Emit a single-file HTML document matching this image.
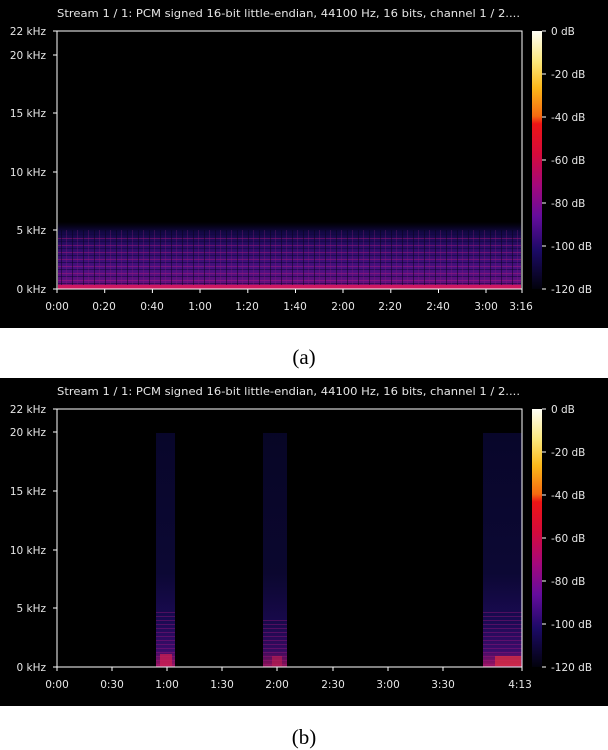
<!DOCTYPE html>
<html><head><style>
html,body{margin:0;padding:0;background:#fff;width:608px;height:750px;overflow:hidden}
svg{display:block}
text{font-family:"DejaVu Sans","Liberation Sans",sans-serif;font-size:10.5px;fill:#e6e6e6}
.cap{font-family:"Liberation Serif",serif;font-size:21px;fill:#000}
</style></head><body>
<svg width="608" height="750" xmlns="http://www.w3.org/2000/svg">
<defs>
<linearGradient id="cb" x1="0" y1="0" x2="0" y2="1">
<stop offset="0" stop-color="#fffff6"/>
<stop offset="0.12" stop-color="#fbe77a"/>
<stop offset="0.22" stop-color="#fbb81a"/>
<stop offset="0.33" stop-color="#f56a10"/>
<stop offset="0.36" stop-color="#ee1515"/>
<stop offset="0.48" stop-color="#d40a3c"/>
<stop offset="0.6" stop-color="#a4087c"/>
<stop offset="0.72" stop-color="#640c9c"/>
<stop offset="0.85" stop-color="#1c0a66"/>
<stop offset="1" stop-color="#02020c"/>
</linearGradient>
<linearGradient id="ba" x1="0" y1="0" x2="0" y2="1">
<stop offset="0" stop-color="#0a0630" stop-opacity="0"/>
<stop offset="0.15" stop-color="#120844"/>
<stop offset="0.35" stop-color="#2c0c68"/>
<stop offset="0.7" stop-color="#4a1080"/>
<stop offset="0.9" stop-color="#60107e"/>
<stop offset="1" stop-color="#c01060"/>
</linearGradient>
<pattern id="hl" width="7" height="7" patternUnits="userSpaceOnUse">
<rect width="7" height="1" fill="#c01878" opacity="0.4"/>
<rect y="3" width="7" height="1" fill="#100640" opacity="0.6"/>
</pattern>
<pattern id="vl" width="11" height="4" patternUnits="userSpaceOnUse">
<rect width="1" height="4" fill="#901a80" opacity="0.3"/>
<rect x="6" width="1" height="4" fill="#060318" opacity="0.5"/>
</pattern>
<linearGradient id="sb" x1="0" y1="0" x2="0" y2="1">
<stop offset="0" stop-color="#08062a"/>
<stop offset="0.6" stop-color="#0c0834"/>
<stop offset="0.8" stop-color="#1a0a52"/>
<stop offset="0.93" stop-color="#3a0c6a"/>
<stop offset="1" stop-color="#a01460"/>
</linearGradient>
<pattern id="hs" width="5" height="4" patternUnits="userSpaceOnUse">
<rect width="5" height="1" fill="#b01880" opacity="0.35"/>
</pattern>
</defs>
<!-- Panel a -->
<rect x="0" y="0" width="608" height="328" fill="#000"/>
<text x="57" y="17" font-size="11.8" textLength="463" lengthAdjust="spacingAndGlyphs">Stream 1 / 1: PCM signed 16-bit little-endian, 44100 Hz, 16 bits, channel 1 / 2....</text>
<rect x="58" y="222" width="463" height="67" fill="url(#ba)"/>
<rect x="58" y="234" width="463" height="55" fill="url(#hl)"/>
<rect x="58" y="230" width="463" height="59" fill="url(#vl)"/>
<rect x="58" y="285" width="463" height="4" fill="#d01860"/>
<path d="M57 31H522V289H57Z" fill="none" stroke="#fff" stroke-width="1"/>
<g stroke="#fff"><path d="M53 31H57M53 55H57M53 113H57M53 172H57M53 230H57M53 289H57"/>
<path d="M57 289v4M104.7 289v4M152.4 289v4M200 289v4M247.8 289v4M295.5 289v4M343 289v4M390.8 289v4M438.5 289v4M486 289v4M522 289v4"/></g>
<g text-anchor="end"><text x="46" y="35">22 kHz</text><text x="46" y="59">20 kHz</text><text x="46" y="117">15 kHz</text><text x="46" y="176">10 kHz</text><text x="46" y="234">5 kHz</text><text x="46" y="293">0 kHz</text></g>
<g text-anchor="middle"><text x="57" y="310">0:00</text><text x="104" y="310">0:20</text><text x="152" y="310">0:40</text><text x="200" y="310">1:00</text><text x="247" y="310">1:20</text><text x="295" y="310">1:40</text><text x="343" y="310">2:00</text><text x="390" y="310">2:20</text><text x="438" y="310">2:40</text><text x="486" y="310">3:00</text><text x="521" y="310">3:16</text></g>
<rect x="532" y="31" width="10" height="258" fill="url(#cb)"/>
<g stroke="#fff"><path d="M542 31h4M542 74h4M542 117h4M542 160h4M542 203h4M542 246h4M542 289h4"/></g>
<g><text x="551" y="35">0 dB</text><text x="551" y="78">-20 dB</text><text x="551" y="121">-40 dB</text><text x="551" y="164">-60 dB</text><text x="551" y="207">-80 dB</text><text x="551" y="250">-100 dB</text><text x="551" y="293">-120 dB</text></g>
<text class="cap" x="304" y="364" text-anchor="middle">(a)</text>
<!-- Panel b -->
<rect x="0" y="378" width="608" height="328" fill="#000"/>
<text x="57" y="395" font-size="11.8" textLength="463" lengthAdjust="spacingAndGlyphs">Stream 1 / 1: PCM signed 16-bit little-endian, 44100 Hz, 16 bits, channel 1 / 2....</text>
<rect x="156" y="433" width="19" height="234" fill="url(#sb)"/>
<rect x="263" y="433" width="24" height="234" fill="url(#sb)" opacity="0.9"/>
<rect x="483" y="433" width="39" height="234" fill="url(#sb)"/>
<rect x="156" y="610" width="19" height="57" fill="url(#hs)"/>
<rect x="263" y="620" width="24" height="47" fill="url(#hs)"/>
<rect x="483" y="610" width="39" height="57" fill="url(#hs)"/>
<rect x="160" y="654" width="12" height="12" fill="#d02050" opacity="0.7"/>
<rect x="272" y="656" width="10" height="10" fill="#c02050" opacity="0.6"/>
<rect x="495" y="656" width="26" height="10" fill="#e03040" opacity="0.7"/>
<path d="M57 409H522V667H57Z" fill="none" stroke="#fff" stroke-width="1"/>
<g stroke="#fff"><path d="M53 409H57M53 432H57M53 491H57M53 550H57M53 608H57M53 667H57"/>
<path d="M57 667v4M112 667v4M167 667v4M222 667v4M277 667v4M333 667v4M388 667v4M443 667v4M522 667v4"/></g>
<g text-anchor="end"><text x="46" y="413">22 kHz</text><text x="46" y="436">20 kHz</text><text x="46" y="495">15 kHz</text><text x="46" y="554">10 kHz</text><text x="46" y="612">5 kHz</text><text x="46" y="671">0 kHz</text></g>
<g text-anchor="middle"><text x="57" y="688">0:00</text><text x="112" y="688">0:30</text><text x="167" y="688">1:00</text><text x="222" y="688">1:30</text><text x="277" y="688">2:00</text><text x="333" y="688">2:30</text><text x="388" y="688">3:00</text><text x="443" y="688">3:30</text><text x="520" y="688">4:13</text></g>
<rect x="532" y="409" width="10" height="258" fill="url(#cb)"/>
<g stroke="#fff"><path d="M542 409h4M542 452h4M542 495h4M542 538h4M542 581h4M542 624h4M542 667h4"/></g>
<g><text x="551" y="413">0 dB</text><text x="551" y="456">-20 dB</text><text x="551" y="499">-40 dB</text><text x="551" y="542">-60 dB</text><text x="551" y="585">-80 dB</text><text x="551" y="628">-100 dB</text><text x="551" y="671">-120 dB</text></g>
<text class="cap" x="304" y="744" text-anchor="middle">(b)</text>
</svg>
</body></html>
